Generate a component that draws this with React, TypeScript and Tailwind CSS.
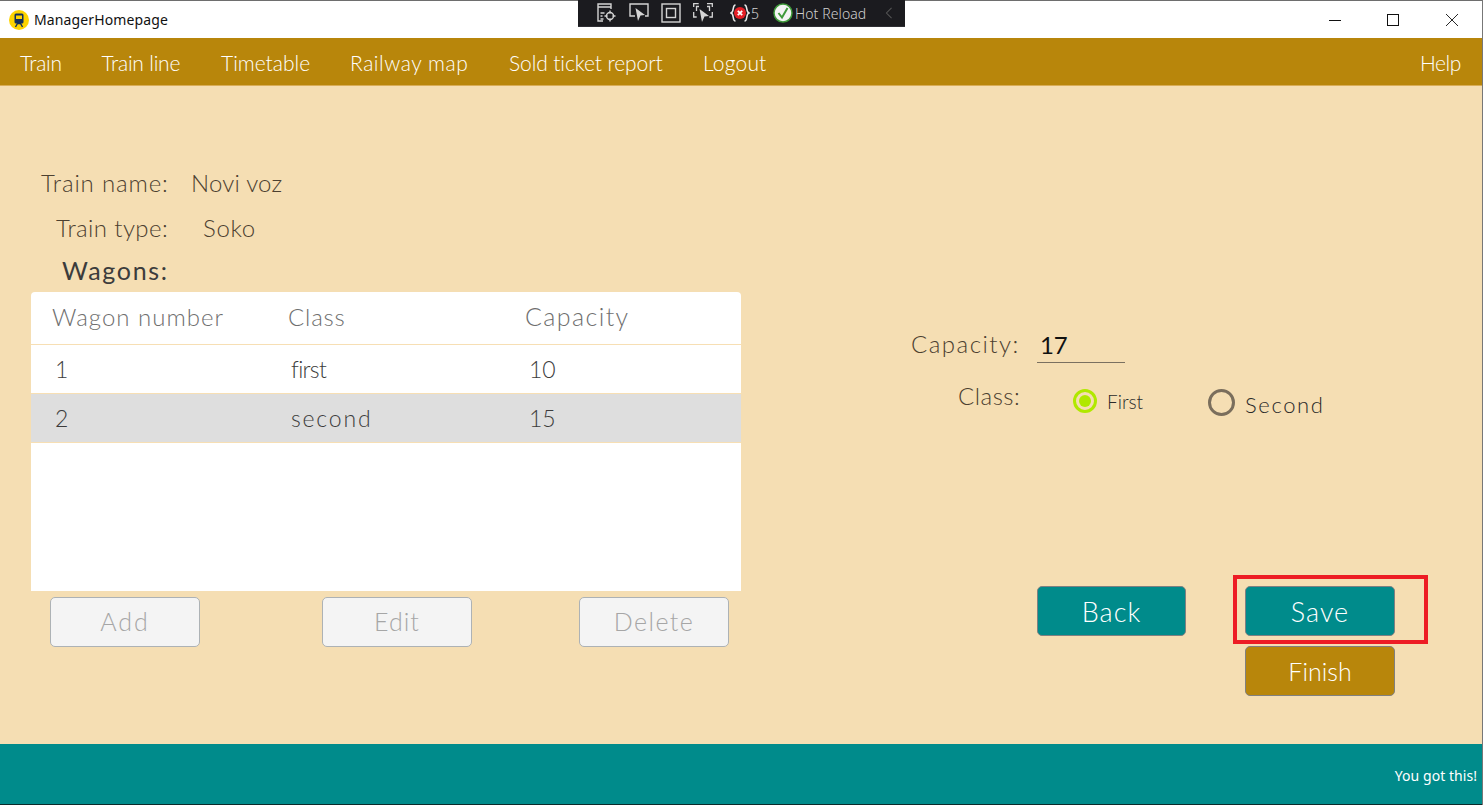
const gothic = "font-['Lato',sans-serif] font-light";

const navItems = [
  { label: "Train", className: "w-[81.5px] tracking-[-0.3px]" },
  { label: "Train line", className: "w-[119.5px] tracking-[-0.2px]" },
  { label: "Timetable", className: "w-[129px]" },
  { label: "Railway map", className: "w-[159px] tracking-[0.55px]" },
  { label: "Sold ticket report", className: "w-[194px] tracking-[-0.1px]" },
  { label: "Logout", className: "tracking-[0.2px]" },
];

function TrainLogo() {
  return (
    <svg viewBox="0 0 20 20" className="h-5 w-5">
      <circle cx="10" cy="10" r="10" fill="#fdd400" />
      <rect x="5.5" y="3.5" width="9" height="10" rx="1.5" fill="#12305c" />
      <rect x="7" y="5.5" width="6" height="3.5" fill="#fdd400" />
      <path d="M6.5 17l2-3.5h3l2 3.5" fill="none" stroke="#12305c" strokeWidth="1.4" />
    </svg>
  );
}

function WindowButtons() {
  return (
    <div className="ml-auto flex items-center pr-[24px]">
      <svg viewBox="0 0 12 12" className="h-3 w-3" fill="none" stroke="#111" strokeWidth="1">
        <path d="M0 6.5h12" />
      </svg>
      <svg viewBox="0 0 12 12" className="ml-[46px] h-3 w-3" fill="none" stroke="#111" strokeWidth="1">
        <rect x="0.5" y="0.5" width="11" height="11" />
      </svg>
      <svg viewBox="0 0 12 12" className="ml-[47px] h-3 w-3" fill="none" stroke="#111" strokeWidth="0.9">
        <path d="M0 0l12 12M12 0L0 12" />
      </svg>
    </div>
  );
}

function DevToolbar() {
  return (
    <div className="absolute left-[578px] top-0 flex h-[27px] w-[327px] items-center border-b border-[#2e2e33] bg-[#1b1b1f] text-[#d0d0d0]">
      <div className="ml-[19px] flex items-center gap-[12px]">
        <svg viewBox="0 0 20 20" className="h-5 w-5" fill="none" stroke="#d4d4d4" strokeWidth="1.4">
          <path d="M1 7V1h13v5M1 4h13M1 7v11h5M3.500 10h4M3.500 13h2M3.500 16h3" />
          <circle cx="13" cy="13" r="3.500" />
          <path d="M13 7.500v3M13 15.500v3M7.500 13h3M15.500 13h3" />
        </svg>
        <svg viewBox="0 0 20 20" className="h-5 w-5" fill="none" stroke="#d4d4d4" strokeWidth="1.4">
          <path d="M6 13H1V1h18v12h-3" />
          <path d="M6.500 5l9.500 7-4.500.5L9 18z" fill="#d4d4d4" stroke="none" />
        </svg>
        <svg viewBox="0 0 20 20" className="h-5 w-5" fill="none" stroke="#d4d4d4" strokeWidth="1.4">
          <rect x="1" y="1" width="18" height="18" />
          <rect x="5.500" y="5.500" width="9" height="9" />
        </svg>
        <svg viewBox="0 0 20 20" className="h-5 w-5" fill="none" stroke="#d4d4d4" strokeWidth="1.300">
          <path d="M0.700 4V0.700h5M14 0.700h5.300V4M0.700 9v5h3M19.300 9v5h-3M3.500 8V3.500h2.500M14 3.500h2.500V8" />
          <path d="M6.500 6l9.500 7-4.500.5L9 19z" fill="#d4d4d4" stroke="none" />
        </svg>
      </div>
      <div className="ml-[17px] flex items-center">
        <svg viewBox="0 0 20 20" className="h-5 w-5">
          <path d="M5.500 2C2 2 4.500 9 1 10c3.500 1 1 8 4.500 8M14.500 2C18 2 15.500 9 19 10c-3.500 1-1 8-4.500 8" fill="none" stroke="#ececec" strokeWidth="1.500" />
          <circle cx="10" cy="10" r="6" fill="#e51f26" />
          <path d="M7.800 7.800l4.400 4.400M12.200 7.800l-4.400 4.400" stroke="#fff" strokeWidth="1.800" />
        </svg>
        <span className="ml-px font-['Noto_Sans',sans-serif] text-[14px]">5</span>
      </div>
      <div className="ml-[14px] flex items-center">
        <svg viewBox="0 0 20 20" className="h-5 w-5">
          <circle cx="10" cy="10" r="9" fill="#f4f4f4" stroke="#3f9a3a" strokeWidth="1.500" />
          <path d="M5.500 10l3.500 4.500L14.500 5" fill="none" stroke="#3f9a3a" strokeWidth="2" />
        </svg>
        <span className="ml-[2px] font-['Noto_Sans',sans-serif] text-[14px] tracking-[0.1px]">Hot Reload</span>
      </div>
      <svg viewBox="0 0 8 14" className="ml-[19px] h-[12px] w-[8px]" fill="none" stroke="#555" strokeWidth="1.200">
        <path d="M7 1L1 7l6 6" />
      </svg>
    </div>
  );
}

function FlatButton({ label, className }: { label: string; className: string }) {
  return (
    <button className={`flex h-[50px] items-center justify-center rounded-[5px] border ${className}`}>
      {label}
    </button>
  );
}

function WagonRow({ num, cls, cap, clsTracking, selected }: { num: string; cls: string; cap: string; clsTracking: string; selected?: boolean }) {
  return (
    <div className={`grid h-[49px] grid-cols-[236px_238px_1fr] items-center border-b border-[#f7dfb4] pl-[24px] text-[23px] text-[#3c3c3c] ${selected ? "bg-[#dedede]" : ""}`}>
      <span>{num}</span>
      <span className={clsTracking}>{cls}</span>
      <span>{cap}</span>
    </div>
  );
}

export default function App() {
  const disabledBtn = "w-[150px] border-[#adb2b5] bg-[#f4f4f4] text-[25px] text-[#a6a6a6]";
  const tealBtn = "border-[#808080] bg-[#008b8b] pt-[2px] text-[27px] tracking-[1px] text-white";

  return (
    <div className={`relative flex h-[805px] w-[1483px] flex-col overflow-hidden border-r border-[#777] bg-[#f5deb3] ${gothic}`}>
      {/* Window title bar */}
      <header className="flex h-[38px] shrink-0 items-center border-t border-[#6e6e6e] bg-white pl-[9px] font-['Noto_Sans',sans-serif] text-[14px] font-normal tracking-[0.13px] text-[#111]">
        <TrainLogo />
        <span className="ml-[5px]">ManagerHomepage</span>
        <WindowButtons />
      </header>
      <DevToolbar />

      {/* Menu */}
      <nav className="flex h-[48px] shrink-0 items-center border-b border-[#d9ad57] bg-[#b8860b] pl-[20px] pr-[21px] pt-[2px] text-[21px] text-white">
        {navItems.map((item) => (
          <span key={item.label} className={item.className}>
            {item.label}
          </span>
        ))}
        <span className="ml-auto tracking-[-0.4px]">Help</span>
      </nav>

      {/* Form */}
      <main className="flex h-[658px] shrink-0">
        <section className="ml-[31px] w-[710px] pt-[83px] text-[24px] text-[#4c4030]">
          <div className="flex h-[28px] items-center pl-[10px]">
            <span className="w-[150px] tracking-[0.85px]">Train name:</span>
            <span className="tracking-[0.2px]">Novi voz</span>
          </div>
          <div className="mt-[17px] flex h-[28px] items-center pl-[25px]">
            <span className="w-[147px] tracking-[0.4px]">Train type:</span>
            <span className="tracking-[0.7px]">Soko</span>
          </div>
          <div className="mt-[15px] flex h-[28px] items-center pl-[31px] text-[25px] font-normal tracking-[1.7px] text-[#3c3c3c]">Wagons:</div>

          <div className="mt-[7px] h-[299px] overflow-hidden rounded-t-[4px] bg-white">
            <div className="grid h-[53px] grid-cols-[236px_237px_1fr] items-center border-b border-[#f7dfb4] pb-[2px] pl-[21px] text-[24px] text-[#6f6f6f]">
              <span className="tracking-[1px]">Wagon number</span>
              <span className="tracking-[0.8px]">Class</span>
              <span className="text-[25px] tracking-[1.400px]">Capacity</span>
            </div>
            <WagonRow num="1" cls="first" cap="10" clsTracking="tracking-[-0.7px]" />
            <WagonRow num="2" cls="second" cap="15" clsTracking="tracking-[1.8px]" selected />
          </div>

          <div className="mt-[6px] flex pl-[19px]">
            <FlatButton label="Add" className={`${disabledBtn} tracking-[2px]`} />
            <FlatButton label="Edit" className={`${disabledBtn} ml-[122px] tracking-[1px]`} />
            <FlatButton label="Delete" className={`${disabledBtn} ml-[107px] tracking-[1.4px]`} />
          </div>
        </section>

        <section className="ml-[170px] flex w-[560px] flex-col pt-[243px] text-[#4c4030]">
          <div className="flex h-[30px] items-center text-[24px]">
            <span className="tracking-[1.500px]">Capacity:</span>
            <span className="ml-[17px] flex h-[38px] w-[88px] items-center border-b border-[#7a7060] pl-[3px] pt-[3px] text-[24px] font-normal leading-none text-[#111]">
              17
            </span>
          </div>
          <div className="mt-[20px] flex h-[36px] items-center text-[24px]">
            <span className="-mt-[2px] ml-[47px] w-[115px] tracking-[0.5px]">Class:</span>
            <span className="mt-[8px] flex h-[24px] w-[24px] items-center justify-center rounded-full border-[3px] border-[#b0e800]">
              <span className="h-[12px] w-[12px] rounded-full bg-[#b0e800]" />
            </span>
            <span className="ml-[10px] mt-[10px] text-[19px] text-[#2a2a2a]">First</span>
            <span className="ml-[65px] mt-[10px] h-[27px] w-[27px] rounded-full border-[3px] border-[#7a6e5c]" />
            <span className="ml-[10px] mt-[14px] text-[22px] tracking-[1.600px] text-[#2a2a2a]">Second</span>
          </div>

          <div className="ml-[126px] mt-[171px] flex">
            <FlatButton label="Back" className={`${tealBtn} w-[149px]`} />
            <div className="relative ml-[59px]">
              <FlatButton label="Save" className={`${tealBtn} w-[150px]`} />
              <div className="absolute -left-[12px] -top-[11px] h-[69px] w-[195px] border-[4px] border-[#ed1c24]" />
            </div>
          </div>
          <FlatButton label="Finish" className="ml-[334px] mt-[10px] w-[150px] border-[#808080] bg-[#b8860b] pt-[2px] text-[25px] text-white" />
        </section>
      </main>

      {/* Footer */}
      <footer className="flex h-[60px] shrink-0 items-center justify-end bg-[#008b8b] pr-[5px] pt-[3px] font-['Noto_Sans',sans-serif] text-[14px] font-normal tracking-[0.05px] text-white">
        You got this!
      </footer>
      <div className="h-px bg-[#0b2b2b]" />
    </div>
  );
}
